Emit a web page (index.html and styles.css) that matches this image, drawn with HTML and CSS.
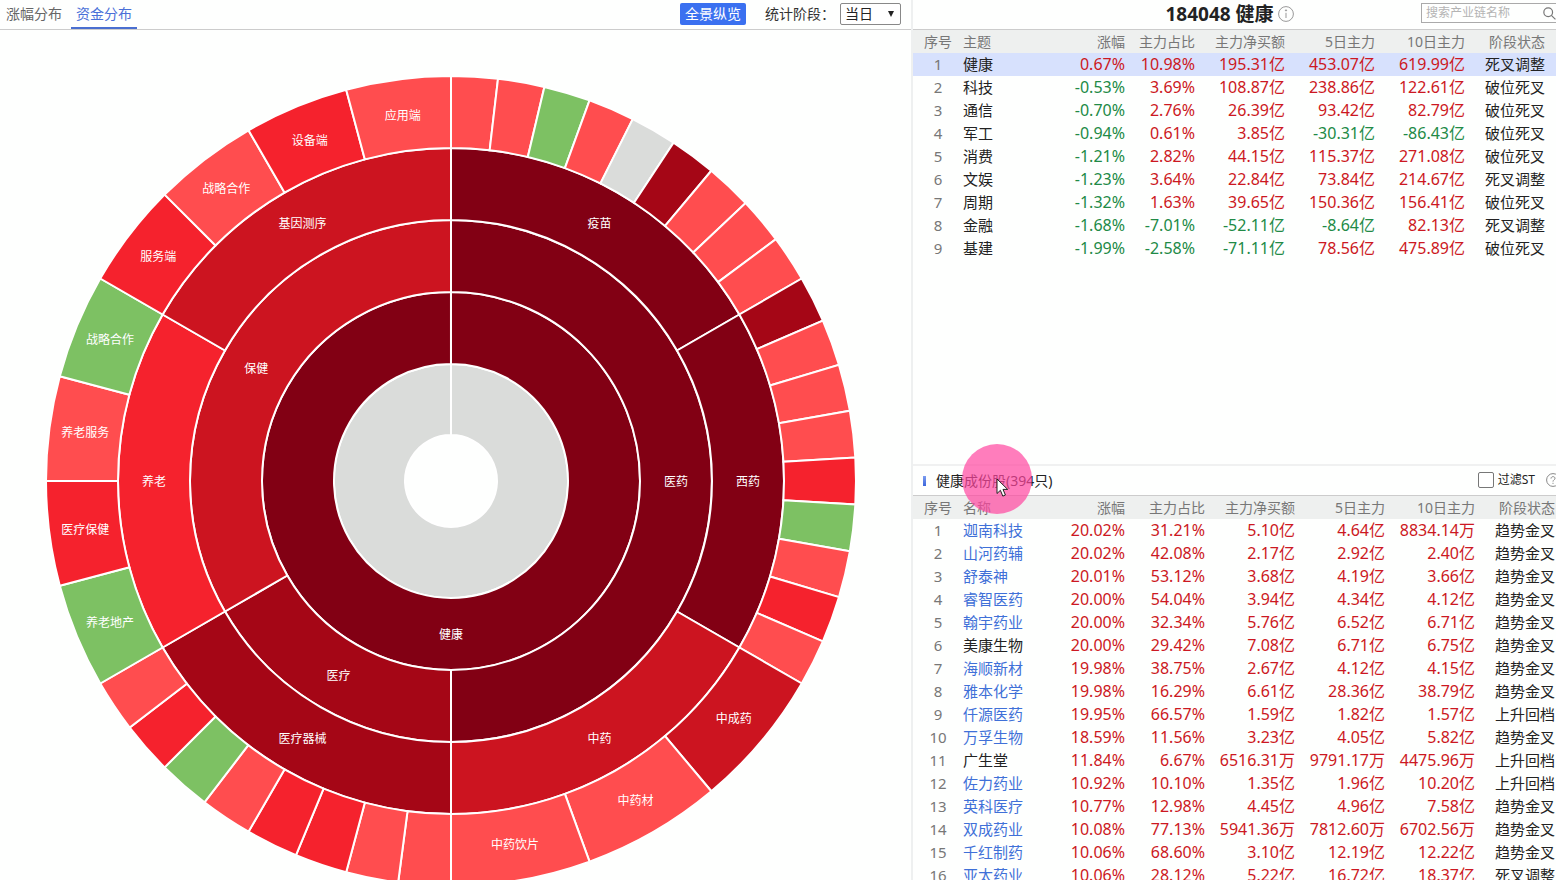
FILE: index.html
```html
<!DOCTYPE html>
<html lang="zh-CN">
<head>
<meta charset="utf-8">
<title>健康 - 资金分布</title>
<link rel="stylesheet" href="styles.css">
</head>
<body>
<main class="layout">
  <section class="chart-panel">
    <header class="toolbar">
      <nav class="tabs">
        <button class="tab" type="button">涨幅分布</button>
        <button class="tab tab-active" type="button">资金分布</button>
      </nav>
      <div class="filters">
        <button class="overview" type="button">全景纵览</button>
        <label class="period-label" for="period">统计阶段：</label>
        <span class="period-box">
          <select id="period" class="period"><option>当日</option></select>
          <svg class="period-arrow" viewBox="0 0 8 8"><path d="M1 1h6L4 7z" fill="#222"/></svg>
        </span>
      </div>
    </header>
    <svg class="sunburst" id="sunburst" viewBox="0 0 911 850" role="img" aria-label="资金分布"></svg>
  </section>

  <aside class="side">
    <section class="themes">
      <header class="side-head">
        <h1 class="side-title">184048 健康
          <svg class="info" viewBox="0 0 16 16" fill="none" stroke="#999"><circle cx="8" cy="8" r="7.4"/><path d="M8 6.8V12"/><circle cx="8" cy="4.4" r=".6" fill="#999"/></svg>
        </h1>
        <div class="search">
          <input class="search-input" type="text" placeholder="搜索产业链名称" aria-label="搜索产业链名称">
          <svg class="search-icon" viewBox="0 0 14 14" fill="none" stroke="#777" stroke-width="1.3"><circle cx="5.6" cy="5.6" r="4.7"/><path d="M9 9L13.4 13.4"/></svg>
        </div>
      </header>
      <table class="grid">
        <colgroup><col class="c-index"><col><col class="c-rise"><col class="c-ratio"><col class="c-flow"><col class="c-flow"><col class="c-flow"><col class="c-state"></colgroup>
        <thead><tr><th class="index">序号</th><th class="name">主题</th><th>涨幅</th><th>主力占比</th><th>主力净买额</th><th>5日主力</th><th>10日主力</th><th class="state">阶段状态</th></tr></thead>
        <tbody id="theme-rows"></tbody>
      </table>
    </section>

    <section class="stocks">
      <header class="stocks-head">
        <h2 class="stocks-title">健康成份股(394只)</h2>
        <div class="stocks-filter">
          <input class="check" type="checkbox" id="st">
          <label class="check-label" for="st">过滤ST</label>
          <svg class="help" viewBox="0 0 14 14" fill="none" stroke="#888"><circle cx="7" cy="7" r="6.4"/><path d="M5 5.6C5 3 9 3 9 5.4 9 6.8 7 6.8 7 8.6M7 9.8v1.1"/></svg>
        </div>
        <div class="click-spot"></div>
        <svg class="pointer" viewBox="0 0 13 20"><path d="M1 1v14.5l3.4-3.2 2.4 5.8 2.6-1.1-2.4-5.6h4.7z" fill="#fff" stroke="#222" stroke-linejoin="round"/></svg>
      </header>
      <table class="grid grid-stocks">
        <colgroup><col class="c-index"><col><col class="c-rise"><col class="c-ratio"><col class="c-flow"><col class="c-flow"><col class="c-flow"><col class="c-state"></colgroup>
        <thead><tr><th class="index">序号</th><th class="name">名称</th><th>涨幅</th><th>主力占比</th><th>主力净买额</th><th>5日主力</th><th>10日主力</th><th class="state">阶段状态</th></tr></thead>
        <tbody id="stock-rows"></tbody>
      </table>
    </section>
  </aside>
</main>
<script src="app.js"></script>
</body>
</html>
```

FILE: styles.css
```css
* { box-sizing: border-box; }

body {
  margin: 0;
  background: #fefffe;
  color: #222;
  font-family: "Noto Sans", "Noto Sans CJK SC", sans-serif;
  font-size: 14px;
  line-height: 20px;
}

button, input, select { font: inherit; color: inherit; }

.layout {
  display: grid;
  grid-template-columns: 911fr 645fr;
  height: 100vh;
  overflow: hidden;
}

.chart-panel {
  display: flex;
  flex-direction: column;
  min-width: 0;
  min-height: 0;
}

.toolbar {
  display: flex;
  flex: none;
  justify-content: space-between;
  height: 30px;
  padding-right: 10px;
  border-bottom: 1px solid #ccc;
}

.tabs { display: flex; gap: 4px; padding-left: 1px; }

.tab {
  height: 29px;
  padding: 0 5px;
  border: 0;
  border-bottom: 2px solid transparent;
  background: none;
  color: #666;
  line-height: 26px;
}

.tab-active { border-color: #4a6fd0; color: #4a70d8; }

.filters { display: flex; align-items: center; padding-bottom: 1px; }

.overview {
  height: 22px;
  margin-right: 19px;
  padding: 0 5px;
  border: 0;
  border-radius: 2px;
  background: #3a70f0;
  color: #fff;
  line-height: 20px;
}

.period-label { margin-right: 5px; color: #333; }

.period-box { position: relative; display: flex; }

.period {
  width: 61px;
  height: 22px;
  padding: 0 4px;
  appearance: none;
  border: 1px solid #888;
  border-radius: 2px;
  background: #fff;
  line-height: 20px;
}

.period-arrow {
  position: absolute;
  top: 7px;
  right: 6px;
  width: 8px;
  height: 8px;
  pointer-events: none;
}

.sunburst {
  flex: 1;
  width: 100%;
  min-height: 0;
}

.slice { stroke: #fff; stroke-width: 2px; }

.slice-label {
  fill: #fff;
  font-size: 12px;
  text-anchor: middle;
  dominant-baseline: central;
}

.side {
  display: flex;
  flex-direction: column;
  min-width: 0;
  min-height: 0;
  overflow: hidden;
  border-left: 2px solid #eef0f0;
}

.themes { flex: 465 1 0; min-height: 0; }

.stocks {
  flex: 415 1 0;
  min-height: 0;
  border-top: 2px solid #f0f1f1;
}

.side-head {
  display: grid;
  grid-template-columns: 1fr auto 1fr;
  height: 30px;
  padding-right: 10px;
  border-bottom: 1px solid #ccc;
}

.side-title {
  display: flex;
  grid-column: 2;
  align-items: center;
  gap: 4px;
  margin: 0;
  font-size: 19px;
  line-height: 26px;
  padding-bottom: 2px;
}

.info { width: 16px; height: 16px; }

.search {
  display: flex;
  align-items: center;
  justify-self: end;
  width: 140px;
  height: 20px;
  margin: 3px -15px 0 0;
  padding-right: 4px;
  border: 1px solid #aaa;
}

.search-input {
  flex: 1;
  min-width: 0;
  height: 18px;
  padding: 0 0 0 4px;
  border: 0;
  outline: 0;
  background: none;
  font-size: 12px;
}

.search-input::placeholder { color: #b4b4b4; }

.search-icon { flex: none; width: 13px; height: 13px; }

.grid {
  width: 100%;
  table-layout: fixed;
  border-collapse: collapse;
}

.c-index { width: 50px; }
.c-rise { width: 83px; }
.c-ratio { width: 70px; }
.c-flow { width: 90px; }
.c-state { width: 91px; }
.grid-stocks .c-ratio { width: 80px; }
.grid-stocks .c-state { width: 81px; }

.grid th,
.grid td {
  height: 23px;
  padding: 0;
  line-height: 23px;
  text-align: right;
  white-space: nowrap;
}

.grid th {
  background: #eef0ef;
  color: #777;
  font-size: 14px;
  font-weight: 400;
}

.grid td { font-size: 16px; }

.grid .index { color: #777; text-align: center; }
.grid .name { text-align: left; }
.grid td.name, .grid td.state, .grid td.index { font-size: 15px; }
.grid .state { padding-right: 11px; }
.grid-stocks .state { padding-right: 1px; }

.grid .up { color: #cc1822; }
.grid .down { color: #218a46; }
.selected { background: #d7e1fd; }
.stock-link { color: #3f70d8; text-decoration: none; }

.stocks-head {
  position: relative;
  display: flex;
  align-items: center;
  justify-content: space-between;
  height: 30px;
  padding-top: 2px;
  border-bottom: 1px solid #ccc;
}

.stocks-title {
  display: flex;
  align-items: center;
  gap: 10px;
  margin: 0 0 0 10px;
  font-size: 14px;
  font-weight: 400;
}

.stocks-title::before {
  width: 3px;
  height: 10px;
  background: linear-gradient(#7d9df0, #3c66dc);
  content: "";
}

.stocks-filter { display: flex; align-items: center; margin-right: -4px; padding-bottom: 2px; }

.check {
  width: 16px;
  height: 16px;
  margin: 0 4px 0 0;
  appearance: none;
  border: 1px solid #777;
  border-radius: 2px;
  background: #fff;
}

.check-label { margin-right: 11px; font-size: 12px; }

.help { width: 14px; height: 14px; }

.click-spot {
  position: absolute;
  top: -22px;
  left: 49px;
  width: 70px;
  height: 70px;
  border-radius: 50%;
  background: rgba(255, 70, 160, 0.7);
  pointer-events: none;
}

.pointer {
  position: absolute;
  top: 12px;
  left: 83px;
  width: 13px;
  height: 20px;
  pointer-events: none;
}
```

FILE: app.js
```js
const DARK = '#820014', DEEP = '#a50616', MID = '#cc1420', RED = '#f5222d';
const LIGHT = '#ff4d4f', GREEN = '#7dc163', GRAY = '#dadcda';
const RADII = [46, 117, 189, 261, 333, 405];
const CENTER = { x: 451, y: 451 };

// Each ring lists [sweep in degrees, colour, label], clockwise from the top.
const even = (sweep, colours) => colours.map(c => [sweep / colours.length, c]);
const rings = [
  [[360, GRAY]],
  [[360, DARK, '健康']],
  [[180, DARK, '医药'], [60, DEEP, '医疗'], [120, MID, '保健']],
  [[60, DARK, '疫苗'], [60, DARK, '西药'], [60, MID, '中药'],
   [60, DEEP, '医疗器械'], [60, RED, '养老'], [60, MID, '基因测序']],
  [
    ...even(60, [LIGHT, LIGHT, GREEN, LIGHT, GRAY, DEEP, LIGHT, LIGHT, LIGHT]),
    ...even(60, [DEEP, LIGHT, LIGHT, LIGHT, RED, GREEN, LIGHT, RED, LIGHT]),
    [20, MID, '中成药'], [20, LIGHT, '中药材'], [20, LIGHT, '中药饮片'],
    ...even(60, [LIGHT, LIGHT, RED, RED, LIGHT, GREEN, RED, LIGHT]),
    [15, GREEN, '养老地产'], [15, RED, '医疗保健'], [15, LIGHT, '养老服务'], [15, GREEN, '战略合作'],
    [15, RED, '服务端'], [15, LIGHT, '战略合作'], [15, RED, '设备端'], [15, LIGHT, '应用端']
  ]
];

function point(radius, degrees) {
  const a = degrees * Math.PI / 180;
  return (CENTER.x + radius * Math.sin(a)).toFixed(2) + ' ' + (CENTER.y - radius * Math.cos(a)).toFixed(2);
}

function slicePath(inner, outer, from, to) {
  const end = to - from === 360 ? to - 0.01 : to;
  const large = end - from > 180 ? 1 : 0;
  return `M${point(inner, from)}L${point(outer, from)}A${outer} ${outer} 0 ${large} 1 ${point(outer, end)}` +
    `L${point(inner, end)}A${inner} ${inner} 0 ${large} 0 ${point(inner, from)}Z`;
}

let slices = '', labels = '';
rings.forEach((ring, i) => {
  let angle = 0;
  ring.forEach(([sweep, colour, label]) => {
    slices += `<path class="slice" fill="${colour}" d="${slicePath(RADII[i], RADII[i + 1], angle, angle + sweep)}"/>`;
    if (label) {
      const [x, y] = point((RADII[i] + RADII[i + 1]) / 2, angle + sweep / 2).split(' ');
      labels += `<text class="slice-label" x="${x}" y="${y}">${label}</text>`;
    }
    angle += sweep;
  });
});
document.getElementById('sunburst').innerHTML = slices + labels;

const themes = `健康 0.67% 10.98% 195.31亿 453.07亿 619.99亿 死叉调整
科技 -0.53% 3.69% 108.87亿 238.86亿 122.61亿 破位死叉
通信 -0.70% 2.76% 26.39亿 93.42亿 82.79亿 破位死叉
军工 -0.94% 0.61% 3.85亿 -30.31亿 -86.43亿 破位死叉
消费 -1.21% 2.82% 44.15亿 115.37亿 271.08亿 破位死叉
文娱 -1.23% 3.64% 22.84亿 73.84亿 214.67亿 死叉调整
周期 -1.32% 1.63% 39.65亿 150.36亿 156.41亿 破位死叉
金融 -1.68% -7.01% -52.11亿 -8.64亿 82.13亿 死叉调整
基建 -1.99% -2.58% -71.11亿 78.56亿 475.89亿 破位死叉`;

const stocks = `迦南科技 20.02% 31.21% 5.10亿 4.64亿 8834.14万 趋势金叉
山河药辅 20.02% 42.08% 2.17亿 2.92亿 2.40亿 趋势金叉
舒泰神 20.01% 53.12% 3.68亿 4.19亿 3.66亿 趋势金叉
睿智医药 20.00% 54.04% 3.94亿 4.34亿 4.12亿 趋势金叉
翰宇药业 20.00% 32.34% 5.76亿 6.52亿 6.71亿 趋势金叉
美康生物 20.00% 29.42% 7.08亿 6.71亿 6.75亿 趋势金叉
海顺新材 19.98% 38.75% 2.67亿 4.12亿 4.15亿 趋势金叉
雅本化学 19.98% 16.29% 6.61亿 28.36亿 38.79亿 趋势金叉
仟源医药 19.95% 66.57% 1.59亿 1.82亿 1.57亿 上升回档
万孚生物 18.59% 11.56% 3.23亿 4.05亿 5.82亿 趋势金叉
广生堂 11.84% 6.67% 6516.31万 9791.17万 4475.96万 上升回档
佐力药业 10.92% 10.10% 1.35亿 1.96亿 10.20亿 上升回档
英科医疗 10.77% 12.98% 4.45亿 4.96亿 7.58亿 趋势金叉
双成药业 10.08% 77.13% 5941.36万 7812.60万 6702.56万 趋势金叉
千红制药 10.06% 68.60% 3.10亿 12.19亿 12.22亿 趋势金叉
亚太药业 10.06% 28.12% 5.22亿 16.72亿 18.37亿 死叉调整`;

const plainNames = ['美康生物', '广生堂'];

function fillRows(id, text, linked) {
  document.getElementById(id).innerHTML = text.split('\n').map((line, i) => {
    const cells = line.split(' ');
    const name = cells.shift(), state = cells.pop();
    const shown = linked && !plainNames.includes(name) ? `<a class="stock-link" href="#">${name}</a>` : name;
    const numbers = cells.map(v => `<td class="${v[0] === '-' ? 'down' : 'up'}">${v}</td>`).join('');
    return `<tr${!linked && i === 0 ? ' class="selected"' : ''}><td class="index">${i + 1}</td>` +
      `<td class="name">${shown}</td>${numbers}<td class="state">${state}</td></tr>`;
  }).join('');
}

fillRows('theme-rows', themes, false);
fillRows('stock-rows', stocks, true);
```
